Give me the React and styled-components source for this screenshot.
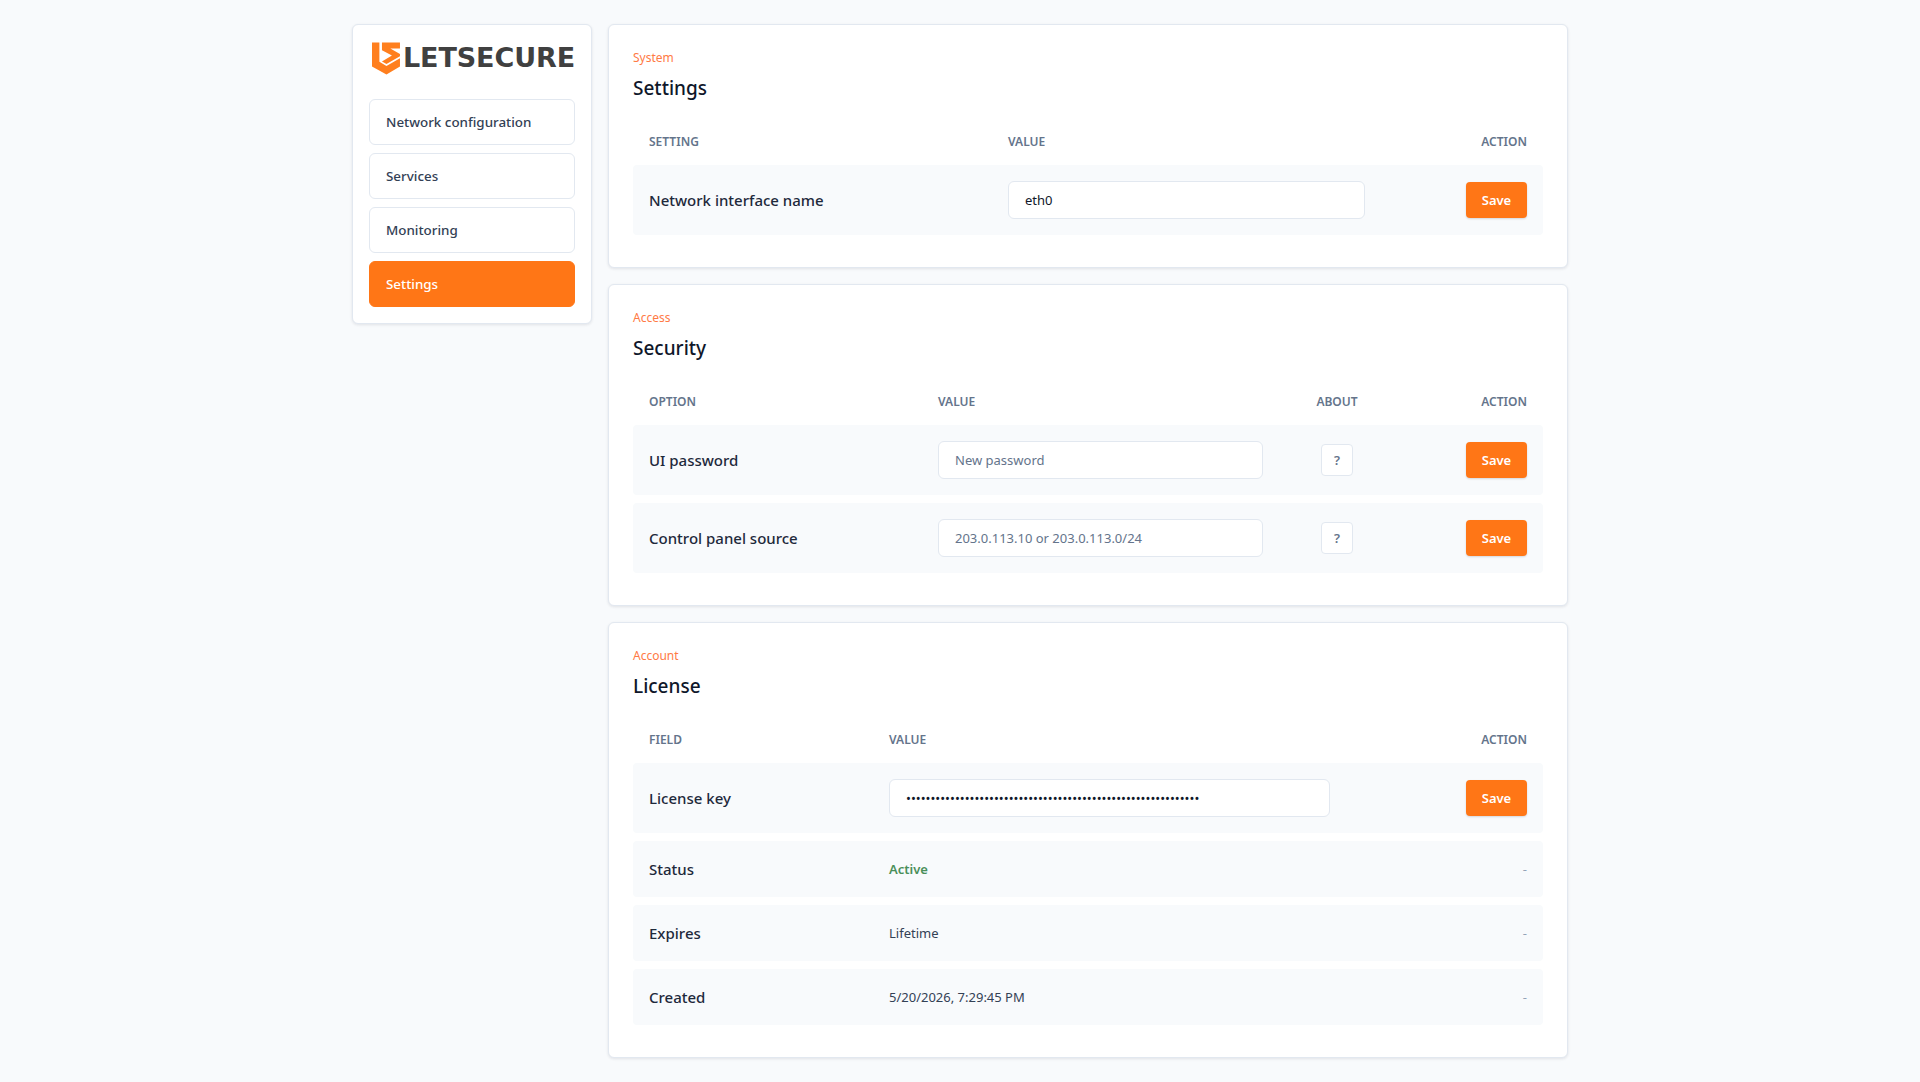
import React from "react";
import styled, { createGlobalStyle } from "styled-components";

const GlobalStyle = createGlobalStyle`
  * { box-sizing: border-box; }
  body {
    margin: 0;
    background: #f8fafc;
    font-family: "Noto Sans", "Open Sans", sans-serif;
    color: #0f172a;
  }
`;

const Layout = styled.div`
  width: 1216px;
  margin: 0 auto;
  padding: 24px 0;
  display: flex;
  align-items: flex-start;
  gap: 16px;
`;

const Panel = styled.div`
  background: #ffffff;
  border: 1px solid #e2e8f0;
  border-radius: 6px;
  box-shadow: 0 1px 3px rgba(15, 23, 42, 0.1);
`;

const Sidebar = styled(Panel)`
  width: 240px;
  flex-shrink: 0;
  padding: 16px;
`;

const Logo = styled.div`
  display: flex;
  align-items: center;
  gap: 3px;
  margin: 0 0 24px 3px;
  height: 34px;
`;

const LogoText = styled.span`
  font-family: "DejaVu Sans", sans-serif;
  font-weight: 700;
  font-size: 27px;
  line-height: 30px;
  letter-spacing: -0.1px;
  color: #404040;
`;

const Nav = styled.nav`
  display: flex;
  flex-direction: column;
  gap: 8px;
`;

const NavItem = styled.a`
  display: flex;
  align-items: center;
  height: 46px;
  padding: 0 16px;
  border-radius: 6px;
  font-size: 13.4px;
  font-weight: 500;
  border: 1px solid ${(p) => (p.$active ? "#ff7616" : "#e2e8f0")};
  background: ${(p) => (p.$active ? "#ff7616" : "#ffffff")};
  color: ${(p) => (p.$active ? "#ffffff" : "#334155")};
`;

const Main = styled.main`
  width: 960px;
  display: flex;
  flex-direction: column;
  gap: 16px;
`;

const Card = styled(Panel)`
  padding: 25px 24px 32px;
`;

const Eyebrow = styled.div`
  font-size: 12px;
  line-height: 16px;
  color: #ff7a45;
`;

const Title = styled.h2`
  margin: 8px 0 17px;
  font-size: 19px;
  line-height: 28px;
  font-weight: 500;
  color: #0f172a;
`;

const Table = styled.table`
  width: 100%;
  table-layout: fixed;
  border-collapse: separate;
  border-spacing: 0 8px;
  margin: -2px 0 -8px;
`;

const Col = styled.col`
  width: ${(p) => p.$w}px;
`;

const Th = styled.th`
  padding: 9px 16px 7px;
  font-size: 12px;
  line-height: 16px;
  font-weight: 600;
  text-transform: uppercase;
  color: #64748b;
  text-align: ${(p) => p.$align || "left"};
`;

const Td = styled.td`
  padding: 16px;
  background: #f8fafc;
  font-size: 13px;
  line-height: 24px;
  text-align: ${(p) => p.$align || "left"};
  color: ${(p) => p.$color || "#334155"};
  font-weight: ${(p) => p.$weight || 400};

  &:first-child {
    border-radius: 4px 0 0 4px;
  }
  &:last-child {
    border-radius: 0 4px 4px 0;
  }
`;

const RowLabel = styled(Td)`
  font-size: 15px;
  font-weight: 500;
  color: #1e293b;
`;

const Input = styled.input`
  display: block;
  width: ${(p) => p.$w}px;
  height: 38px;
  padding: 0 16px;
  border: 1px solid #e2e8f0;
  border-radius: 6px;
  background: #ffffff;
  font-family: inherit;
  font-size: 13px;
  color: #0f172a;
  outline: none;

  &::placeholder {
    color: #64748b;
  }
`;

const SaveButton = styled.button`
  display: inline-block;
  vertical-align: middle;
  width: 61px;
  height: 36px;
  border: none;
  border-radius: 4px;
  background: #ff7616;
  color: #ffffff;
  font-family: inherit;
  font-size: 13px;
  font-weight: 600;
  box-shadow: 0 1px 2px rgba(15, 23, 42, 0.15);
`;

const HelpButton = styled.button`
  display: block;
  margin: 0 auto;
  width: 32px;
  height: 32px;
  border: 1px solid #e2e8f0;
  border-radius: 4px;
  background: #ffffff;
  color: #64748b;
  font-family: inherit;
  font-size: 13px;
  font-weight: 600;
`;

function ShieldLogo() {
  return (
    <svg width="29" height="33" viewBox="0 0 87 100" fill="#ff7f1e">
      <path d="M0 0H23V60L45 73L87 49V75L45 100L0 75Z" />
      <path d="M31 0H87V19H57L87 36V43L45 67L31 59L62 41L31 24Z" />
    </svg>
  );
}

function Save() {
  return <SaveButton type="button">Save</SaveButton>;
}

export default function App() {
  return (
    <>
      <GlobalStyle />
      <Layout>
        <Sidebar>
          <Logo>
            <ShieldLogo />
            <LogoText>LETSECURE</LogoText>
          </Logo>
          <Nav>
            <NavItem>Network configuration</NavItem>
            <NavItem>Services</NavItem>
            <NavItem>Monitoring</NavItem>
            <NavItem $active>Settings</NavItem>
          </Nav>
        </Sidebar>
        <Main>
          <Card>
            <Eyebrow>System</Eyebrow>
            <Title>Settings</Title>
            <Table>
              <colgroup>
                <Col $w={359} />
                <Col $w={400} />
                <Col />
              </colgroup>
              <thead>
                <tr>
                  <Th>Setting</Th>
                  <Th>Value</Th>
                  <Th $align="right">Action</Th>
                </tr>
              </thead>
              <tbody>
                <tr>
                  <RowLabel>Network interface name</RowLabel>
                  <Td><Input $w={357} defaultValue="eth0" /></Td>
                  <Td $align="right"><Save /></Td>
                </tr>
              </tbody>
            </Table>
          </Card>

          <Card>
            <Eyebrow>Access</Eyebrow>
            <Title>Security</Title>
            <Table>
              <colgroup>
                <Col $w={289} />
                <Col $w={378} />
                <Col $w={74} />
                <Col />
              </colgroup>
              <thead>
                <tr>
                  <Th>Option</Th>
                  <Th>Value</Th>
                  <Th $align="center">About</Th>
                  <Th $align="right">Action</Th>
                </tr>
              </thead>
              <tbody>
                <tr>
                  <RowLabel>UI password</RowLabel>
                  <Td><Input $w={325} type="password" placeholder="New password" /></Td>
                  <Td><HelpButton type="button">?</HelpButton></Td>
                  <Td $align="right"><Save /></Td>
                </tr>
                <tr>
                  <RowLabel>Control panel source</RowLabel>
                  <Td><Input $w={325} placeholder="203.0.113.10 or 203.0.113.0/24" /></Td>
                  <Td><HelpButton type="button">?</HelpButton></Td>
                  <Td $align="right"><Save /></Td>
                </tr>
              </tbody>
            </Table>
          </Card>

          <Card>
            <Eyebrow>Account</Eyebrow>
            <Title>License</Title>
            <Table>
              <colgroup>
                <Col $w={240} />
                <Col $w={520} />
                <Col />
              </colgroup>
              <thead>
                <tr>
                  <Th>Field</Th>
                  <Th>Value</Th>
                  <Th $align="right">Action</Th>
                </tr>
              </thead>
              <tbody>
                <tr>
                  <RowLabel>License key</RowLabel>
                  <Td><Input $w={441} type="password" defaultValue="xxxxxxxxxxxxxxxxxxxxxxxxxxxxxxxxxxxxxxxxxxxxxxxxxxxxxxxxxxxx" /></Td>
                  <Td $align="right"><Save /></Td>
                </tr>
                <tr>
                  <RowLabel>Status</RowLabel>
                  <Td $color="#4a8f5a" $weight={600}>Active</Td>
                  <Td $align="right" $color="#94a3b8">-</Td>
                </tr>
                <tr>
                  <RowLabel>Expires</RowLabel>
                  <Td>Lifetime</Td>
                  <Td $align="right" $color="#94a3b8">-</Td>
                </tr>
                <tr>
                  <RowLabel>Created</RowLabel>
                  <Td>5/20/2026, 7:29:45 PM</Td>
                  <Td $align="right" $color="#94a3b8">-</Td>
                </tr>
              </tbody>
            </Table>
          </Card>
        </Main>
      </Layout>
    </>
  );
}
